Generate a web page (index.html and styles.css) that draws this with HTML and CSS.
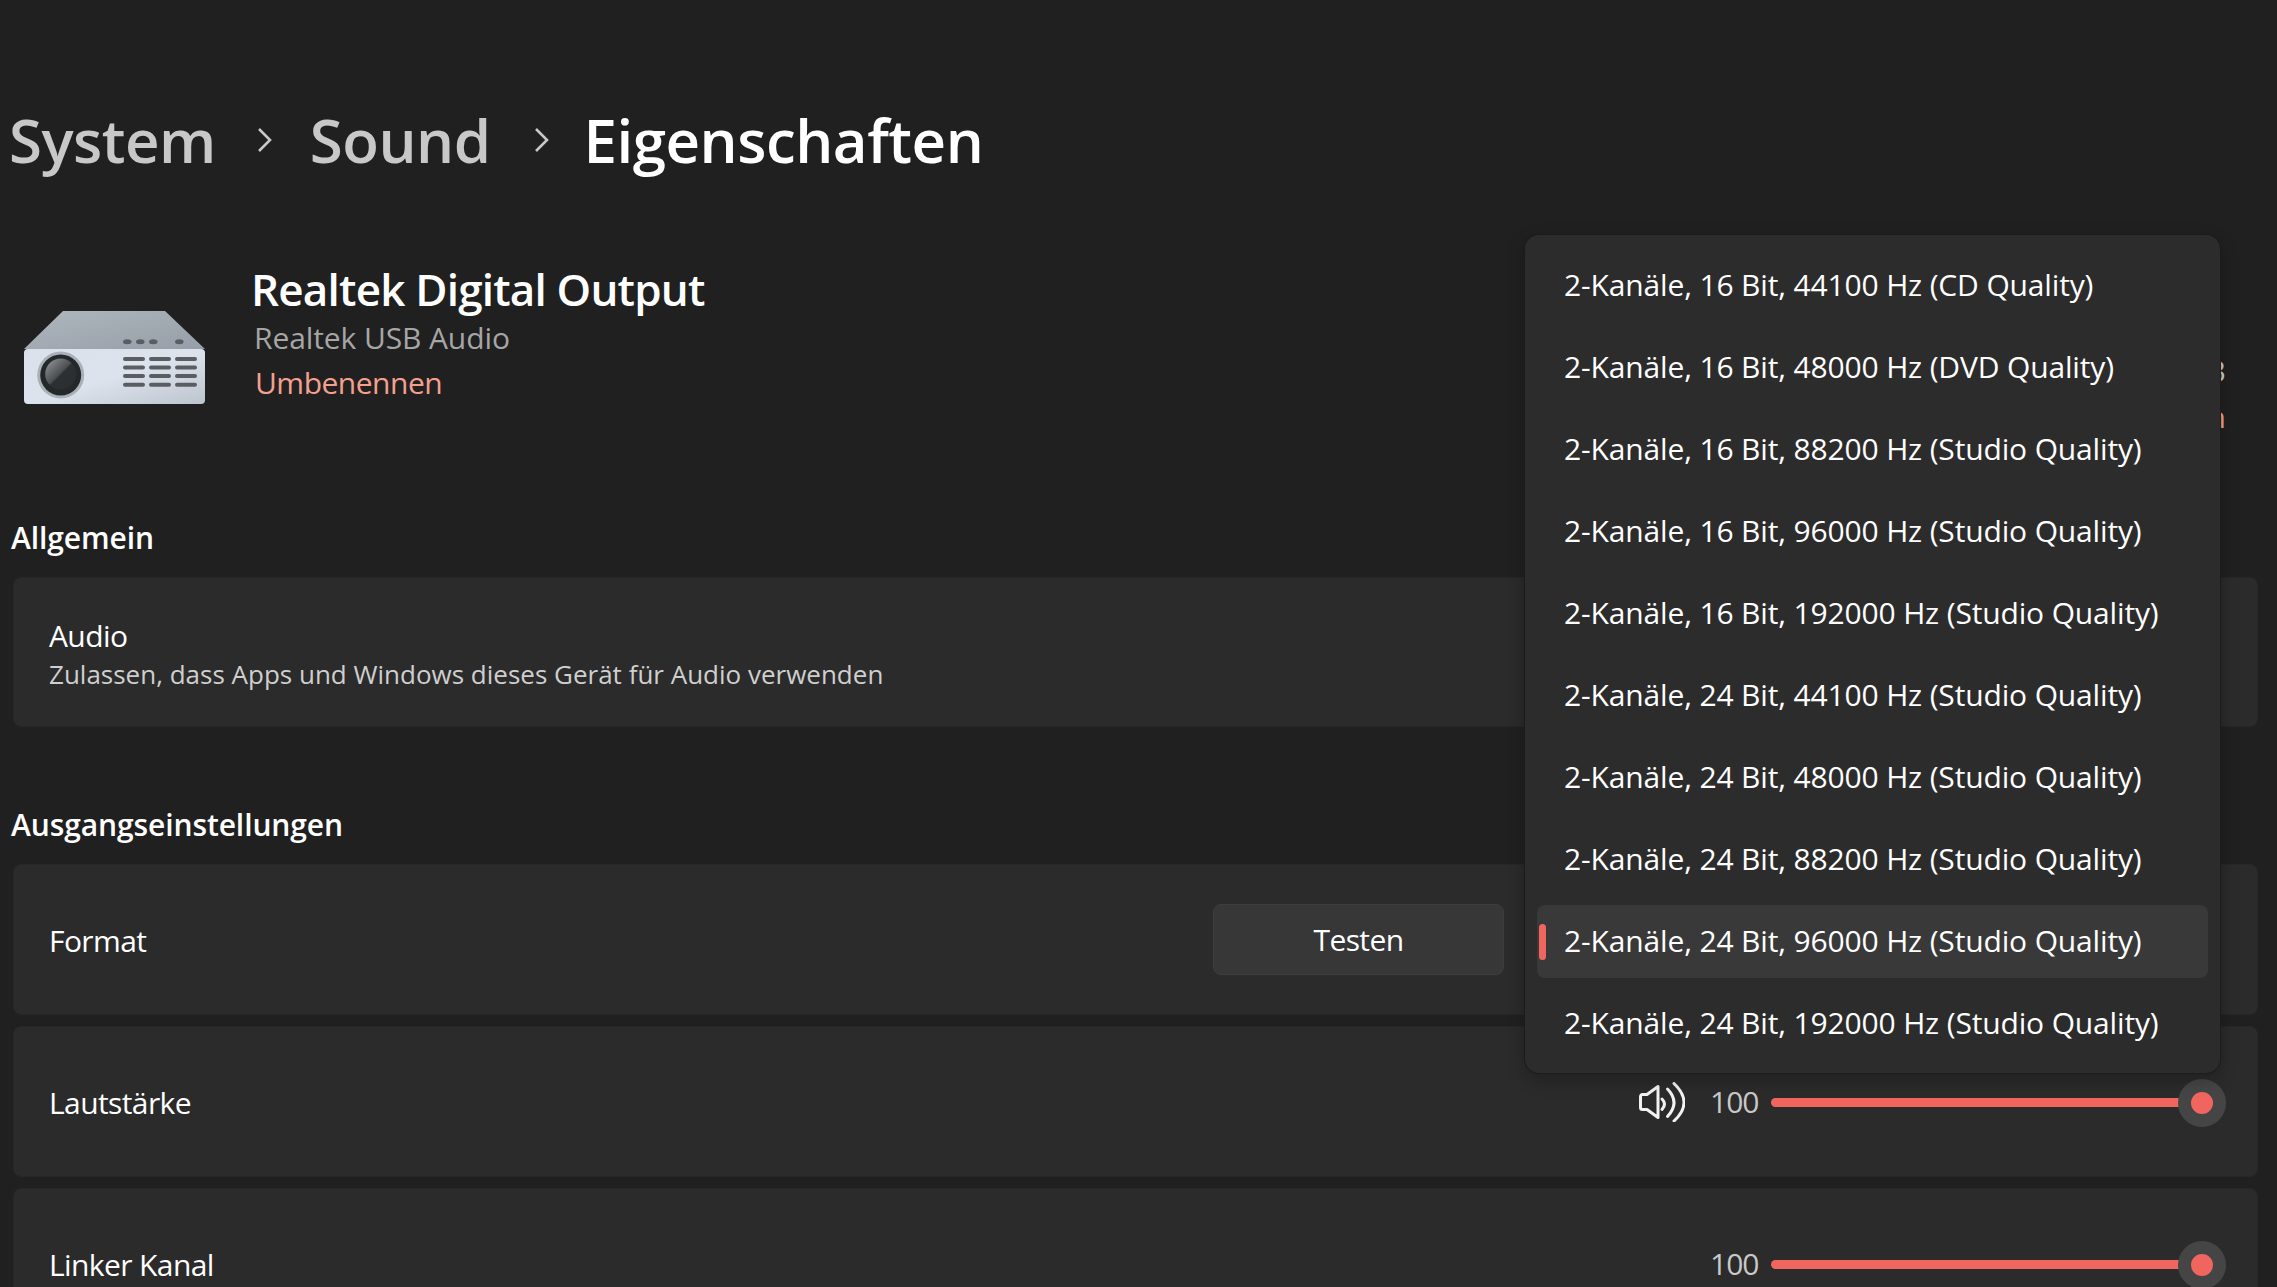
FILE: index.html
```html
<!DOCTYPE html>
<html lang="de">
<head>
    <meta charset="UTF-8">
    <meta name="viewport" content="width=device-width, initial-scale=1.0">
    <title>Eigenschaften</title>
    <link rel="stylesheet" href="styles.css">
</head>
<body>
    <header class="breadcrumb">
        <span class="crumb">System</span>
        <svg class="chevron chevron-first" viewBox="0 0 15 26"><path d="M2 2l11 11L2 24"/></svg>
        <span class="crumb">Sound</span>
        <svg class="chevron chevron-second" viewBox="0 0 15 26"><path d="M2 2l11 11L2 24"/></svg>
        <span class="crumb crumb-current">Eigenschaften</span>
    </header>

    <section class="device">
        <svg class="device-icon" viewBox="0 0 181 94">
            <defs>
                <linearGradient id="topFace" x1="0" y1="0" x2="1" y2="1">
                    <stop offset="0" stop-color="#aeb6be"/>
                    <stop offset="1" stop-color="#969ea7"/>
                </linearGradient>
                <linearGradient id="frontFace" x1="0" y1="0" x2="1" y2="1">
                    <stop offset="0" stop-color="#dbe1ea"/>
                    <stop offset="0.5" stop-color="#dde3ec"/>
                    <stop offset="1" stop-color="#bcc4ce"/>
                </linearGradient>
                <linearGradient id="lensGlass" x1="0" y1="0" x2="1" y2="1">
                    <stop offset="0" stop-color="#9a9d9f"/>
                    <stop offset="0.48" stop-color="#4a4e51"/>
                    <stop offset="0.52" stop-color="#2c3033"/>
                    <stop offset="1" stop-color="#2a2e31"/>
                </linearGradient>
            </defs>
            <path d="M39 0h102l40 38H0z" fill="url(#topFace)"/>
            <rect x="0" y="38" width="181" height="55" rx="4" fill="url(#frontFace)"/>
            <circle cx="36.7" cy="64" r="23.5" fill="#a9b0b8"/>
            <circle cx="36.7" cy="64" r="20.5" fill="#25282a"/>
            <circle cx="36.7" cy="63" r="15.5" fill="url(#lensGlass)"/>
            <g fill="#5a5e63">
                <ellipse cx="103.3" cy="30.7" rx="4.3" ry="2.5"/>
                <ellipse cx="116.3" cy="30.7" rx="4.3" ry="2.5"/>
                <ellipse cx="129.3" cy="30.7" rx="4.3" ry="2.5"/>
                <ellipse cx="155.3" cy="30.7" rx="4.3" ry="2.5"/>
                <rect x="99" y="46" width="22" height="4" rx="2"/>
                <rect x="125" y="46" width="22" height="4" rx="2"/>
                <rect x="151" y="46" width="22" height="4" rx="2"/>
                <rect x="99" y="54.5" width="22" height="4" rx="2"/>
                <rect x="125" y="54.5" width="22" height="4" rx="2"/>
                <rect x="151" y="54.5" width="22" height="4" rx="2"/>
                <rect x="99" y="63" width="22" height="4" rx="2"/>
                <rect x="125" y="63" width="22" height="4" rx="2"/>
                <rect x="151" y="63" width="22" height="4" rx="2"/>
                <rect x="99" y="71.7" width="22" height="4" rx="2"/>
                <rect x="125" y="71.7" width="22" height="4" rx="2"/>
                <rect x="151" y="71.7" width="22" height="4" rx="2"/>
            </g>
        </svg>
        <div class="device-text">
            <div class="device-name">Realtek Digital Output</div>
            <div class="device-vendor">Realtek USB Audio</div>
            <a class="device-link">Umbenennen</a>
        </div>
        <!-- only the last letters show next to the open list -->
        <div class="device-side">
            <div class="side-value">3</div>
            <div class="side-link">n</div>
        </div>
    </section>

    <h2 class="section-title">Allgemein</h2>
    <div class="card card-audio">
        <div>
            <div class="card-label">Audio</div>
            <div class="card-sub">Zulassen, dass Apps und Windows dieses Gerät für Audio verwenden</div>
        </div>
    </div>

    <h2 class="section-title section-output">Ausgangseinstellungen</h2>
    <div class="card">
        <div class="card-label">Format</div>
        <button class="test-button">Testen</button>
    </div>
    <div class="card">
        <div class="card-label">Lautstärke</div>
        <div class="slider-group">
            <svg class="speaker" viewBox="0 0 46 40">
                <path d="M1.5 14.5a2 2 0 0 1 2-2H8L19 4.5v31L8 27.5H3.5a2 2 0 0 1-2-2z"/>
                <path d="M23 17Q28 22 23 27.5"/>
                <path d="M28.5 7Q41.5 20.5 28.5 34.5"/>
                <path d="M35 1.5Q55 20.5 35 39"/>
            </svg>
            <span class="slider-value">100</span>
            <div class="slider">
                <div class="slider-track"></div>
                <div class="slider-thumb"></div>
            </div>
        </div>
    </div>
    <div class="card">
        <div class="card-label">Linker Kanal</div>
        <div class="slider-group">
            <span class="slider-value">100</span>
            <div class="slider">
                <div class="slider-track"></div>
                <div class="slider-thumb"></div>
            </div>
        </div>
    </div>

    <!-- Open format list -->
    <ul class="format-list">
        <li class="format-item">2-Kanäle, 16 Bit, 44100 Hz (CD Quality)</li>
        <li class="format-item">2-Kanäle, 16 Bit, 48000 Hz (DVD Quality)</li>
        <li class="format-item">2-Kanäle, 16 Bit, 88200 Hz (Studio Quality)</li>
        <li class="format-item">2-Kanäle, 16 Bit, 96000 Hz (Studio Quality)</li>
        <li class="format-item">2-Kanäle, 16 Bit, 192000 Hz (Studio Quality)</li>
        <li class="format-item">2-Kanäle, 24 Bit, 44100 Hz (Studio Quality)</li>
        <li class="format-item">2-Kanäle, 24 Bit, 48000 Hz (Studio Quality)</li>
        <li class="format-item">2-Kanäle, 24 Bit, 88200 Hz (Studio Quality)</li>
        <li class="format-item format-selected">2-Kanäle, 24 Bit, 96000 Hz (Studio Quality)</li>
        <li class="format-item">2-Kanäle, 24 Bit, 192000 Hz (Studio Quality)</li>
    </ul>
</body>
</html>
```

FILE: styles.css
```css
/* Reset default styles */
* {
    margin: 0;
    padding: 0;
    box-sizing: border-box;
}
html, body {
    height: 1287px;
    overflow: hidden;
}
body {
    position: relative;
    font-family: 'Open Sans', 'Noto Sans', sans-serif;
    background-color: #202020;
    color: #fff;
}

/* Breadcrumb */
.breadcrumb {
    display: flex;
    align-items: center;
    height: 80px;
    margin-top: 100px;
    padding-left: 9px;
    font-size: 60px;
    font-weight: 600;
    letter-spacing: -0.5px;
}
.crumb {
    color: #c8c8c8;
}
.crumb-current {
    color: #fff;
}
.chevron {
    width: 15px;
    height: 26px;
    fill: none;
    stroke: #c8c8c8;
    stroke-width: 2.6;
}
.chevron-first {
    margin: 0 38px 0 41px;
}
.chevron-second {
    margin: 0 35px 0 43px;
}

/* Device header */
.device {
    display: flex;
    align-items: flex-start;
    height: 336px;
    padding-top: 83px;
    padding-left: 24px;
    padding-right: 51px;
}
.device-icon {
    width: 181px;
    height: 94px;
    margin-top: 48px;
    margin-right: 46px;
}
.device-text {
    flex: 1;
}
.device-name {
    font-size: 44px;
    font-weight: 600;
    line-height: 52px;
    letter-spacing: -0.8px;
}
.device-vendor {
    margin-top: 2px;
    margin-left: 3px;
    font-size: 30px;
    line-height: 42px;
    letter-spacing: -0.1px;
    color: #a6a6a6;
}
.device-link {
    display: block;
    margin-left: 4px;
    font-size: 30px;
    line-height: 48px;
    letter-spacing: -0.5px;
    color: #f4a08f;
}
.device-side {
    margin-top: 85px;
    text-align: right;
    font-size: 30px;
    line-height: 46px;
    color: #ccc;
}
.side-link {
    color: #f4a08f;
}

/* Sections */
.section-title {
    height: 44px;
    margin-left: 11px;
    margin-bottom: 17px;
    font-size: 30px;
    font-weight: 600;
    line-height: 44px;
    letter-spacing: -0.1px;
}
.section-output {
    margin-top: 76px;
}
.card {
    display: flex;
    align-items: center;
    justify-content: space-between;
    height: 151px;
    margin: 0 19px 11px 13px;
    padding: 0 31px 0 35px;
    background-color: #2b2b2b;
    border: 1px solid #272727;
    border-radius: 8px;
}
.card-audio {
    height: 150px;
    padding-top: 2px;
}
.card-label {
    padding-top: 2px;
    font-size: 30px;
    line-height: 40px;
    letter-spacing: -0.6px;
}
.card-sub {
    font-size: 26px;
    line-height: 36px;
    color: #cfcfcf;
}

.test-button {
    width: 291px;
    height: 71px;
    margin-right: 722px;
    font-family: inherit;
    font-size: 30px;
    letter-spacing: -0.6px;
    color: #fff;
    background-color: #373737;
    border: 1px solid #3d3d3d;
    border-radius: 8px;
}

/* Sliders */
.slider-group {
    display: flex;
    align-items: center;
}
.speaker {
    width: 46px;
    height: 40px;
    margin-right: 25px;
    fill: none;
    stroke: #f2f2f2;
    stroke-width: 3;
    stroke-linejoin: round;
    stroke-linecap: round;
}
.slider-value {
    width: 46px;
    margin-right: 15px;
    font-size: 30px;
    letter-spacing: -1px;
    color: #c8c8c8;
}
.slider {
    display: flex;
    align-items: center;
    width: 455px;
    padding-top: 2px;
}
.slider-track {
    width: 413px;
    height: 9px;
    background-color: #f0665f;
    border-radius: 5px 0 0 5px;
}
.slider-thumb {
    width: 48px;
    height: 48px;
    margin-left: -6px;
    border: 13px solid #454545;
    border-radius: 50%;
    background-color: #f0665f;
}

/* Open format list */
.format-list {
    position: absolute;
    top: 235px;
    left: 1525px;
    width: 695px;
    display: flex;
    flex-direction: column;
    gap: 9px;
    padding: 13.5px 12px;
    list-style: none;
    background-color: #2c2c2c;
    border-radius: 14px;
    box-shadow: 0 0 0 1px #1c1c1c, 0 6px 18px rgba(0,0,0,0.28);
}
.format-item {
    position: relative;
    height: 73px;
    padding-left: 27px;
    font-size: 30px;
    line-height: 71px;
    letter-spacing: -0.15px;
    white-space: nowrap;
    border-radius: 8px;
}
.format-selected {
    background-color: #393939;
}
.format-selected::before {
    content: "";
    position: absolute;
    left: 2px;
    top: 19px;
    width: 7px;
    height: 36px;
    border-radius: 4px;
    background-color: #f0665f;
}
```
